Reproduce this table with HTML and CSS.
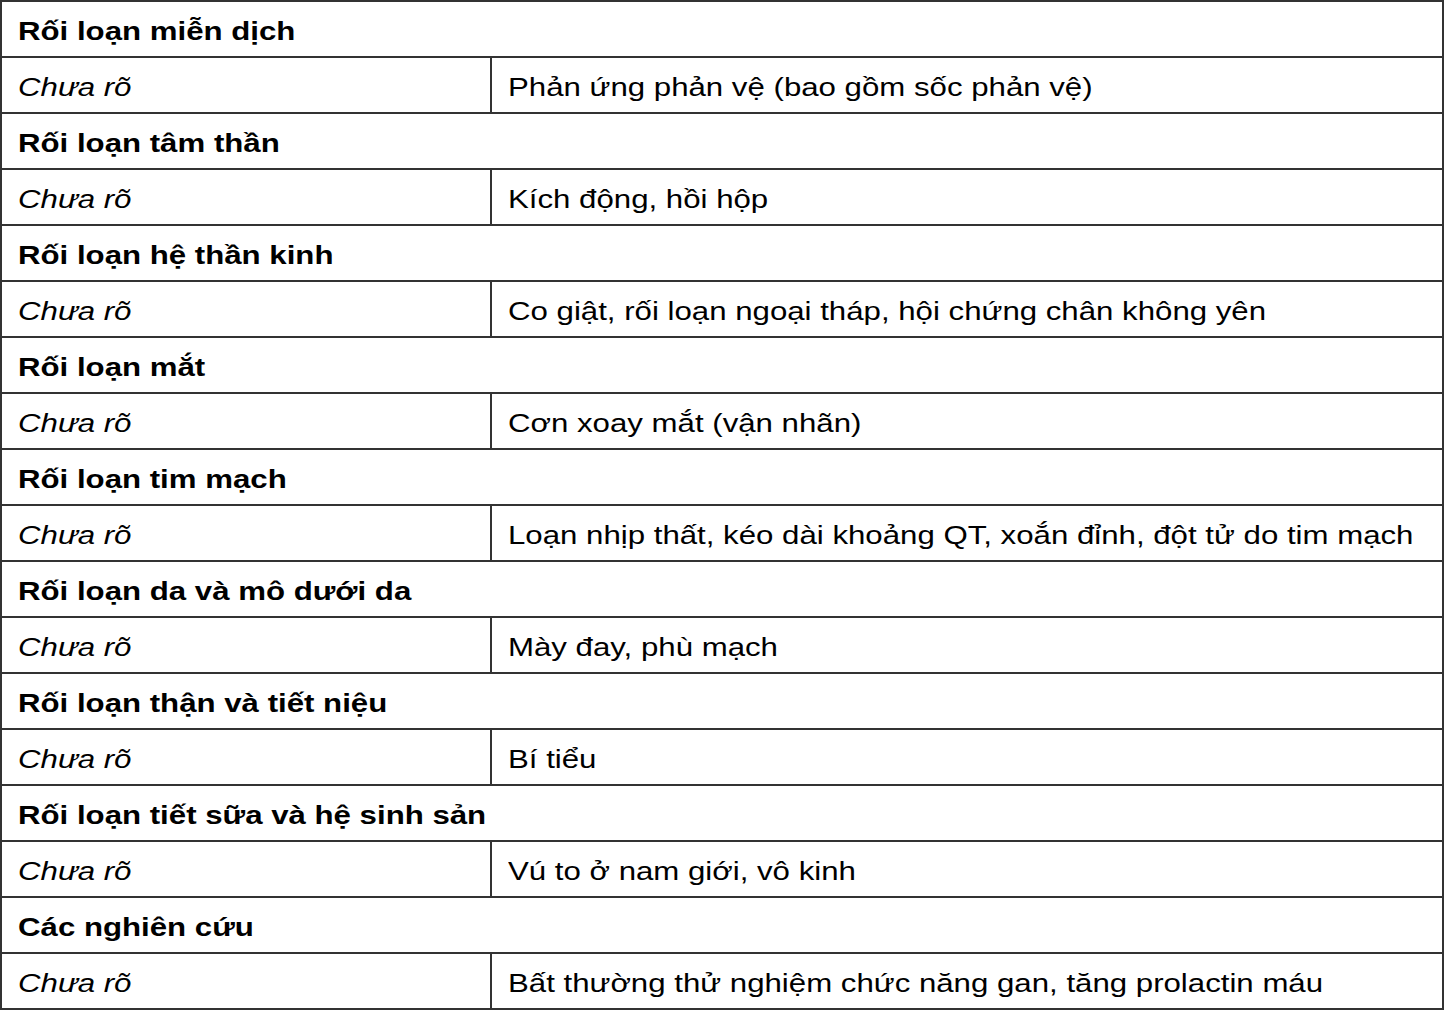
FILE: index.html
```html
<!DOCTYPE html>
<html lang="vi">
<head>
<meta charset="utf-8">
<link rel="stylesheet" href="styles.css">
</head>
<body>
<table class="ae">
<colgroup><col class="c1"><col class="c2"></colgroup>
<tr><th colspan="2"><span class="t">Rối loạn miễn dịch</span></th></tr>
<tr><td class="f"><span class="t">Chưa rõ</span></td><td><span class="t">Phản ứng phản vệ (bao gồm sốc phản vệ)</span></td></tr>
<tr><th colspan="2"><span class="t">Rối loạn tâm thần</span></th></tr>
<tr><td class="f"><span class="t">Chưa rõ</span></td><td><span class="t">Kích động, hồi hộp</span></td></tr>
<tr><th colspan="2"><span class="t">Rối loạn hệ thần kinh</span></th></tr>
<tr><td class="f"><span class="t">Chưa rõ</span></td><td><span class="t">Co giật, rối loạn ngoại tháp, hội chứng chân không yên</span></td></tr>
<tr><th colspan="2"><span class="t">Rối loạn mắt</span></th></tr>
<tr><td class="f"><span class="t">Chưa rõ</span></td><td><span class="t">Cơn xoay mắt (vận nhãn)</span></td></tr>
<tr><th colspan="2"><span class="t">Rối loạn tim mạch</span></th></tr>
<tr><td class="f"><span class="t">Chưa rõ</span></td><td><span class="t">Loạn nhịp thất, kéo dài khoảng QT, xoắn đỉnh, đột tử do tim mạch</span></td></tr>
<tr><th colspan="2"><span class="t">Rối loạn da và mô dưới da</span></th></tr>
<tr><td class="f"><span class="t">Chưa rõ</span></td><td><span class="t">Mày đay, phù mạch</span></td></tr>
<tr><th colspan="2"><span class="t">Rối loạn thận và tiết niệu</span></th></tr>
<tr><td class="f"><span class="t">Chưa rõ</span></td><td><span class="t">Bí tiểu</span></td></tr>
<tr><th colspan="2"><span class="t">Rối loạn tiết sữa và hệ sinh sản</span></th></tr>
<tr><td class="f"><span class="t">Chưa rõ</span></td><td><span class="t">Vú to ở nam giới, vô kinh</span></td></tr>
<tr><th colspan="2"><span class="t">Các nghiên cứu</span></th></tr>
<tr><td class="f"><span class="t">Chưa rõ</span></td><td><span class="t">Bất thường thử nghiệm chức năng gan, tăng prolactin máu</span></td></tr>
</table>
</body>
</html>
```
FILE: styles.css
```css
html, body {
  margin: 0;
  padding: 0;
  background: #fff;
}
.ae {
  width: 1444px;
  border-collapse: collapse;
  table-layout: fixed;
  font-family: "Liberation Sans", Arial, sans-serif;
  font-size: 26px;
  color: #000;
  border: 2px solid #000;
}
.c1 { width: 490px; }
.ae th, .ae td {
  height: 56px;
  padding: 3px 0 0 16px;
  border: 2px solid #333;
  text-align: left;
  vertical-align: middle;
  white-space: nowrap;
  line-height: 30px;
  box-sizing: border-box;
}
.ae th { font-weight: bold; }
.ae td.f { font-style: italic; }
.t {
  display: inline-block;
  transform: scaleX(1.2);
  transform-origin: 0 50%;
}
```
